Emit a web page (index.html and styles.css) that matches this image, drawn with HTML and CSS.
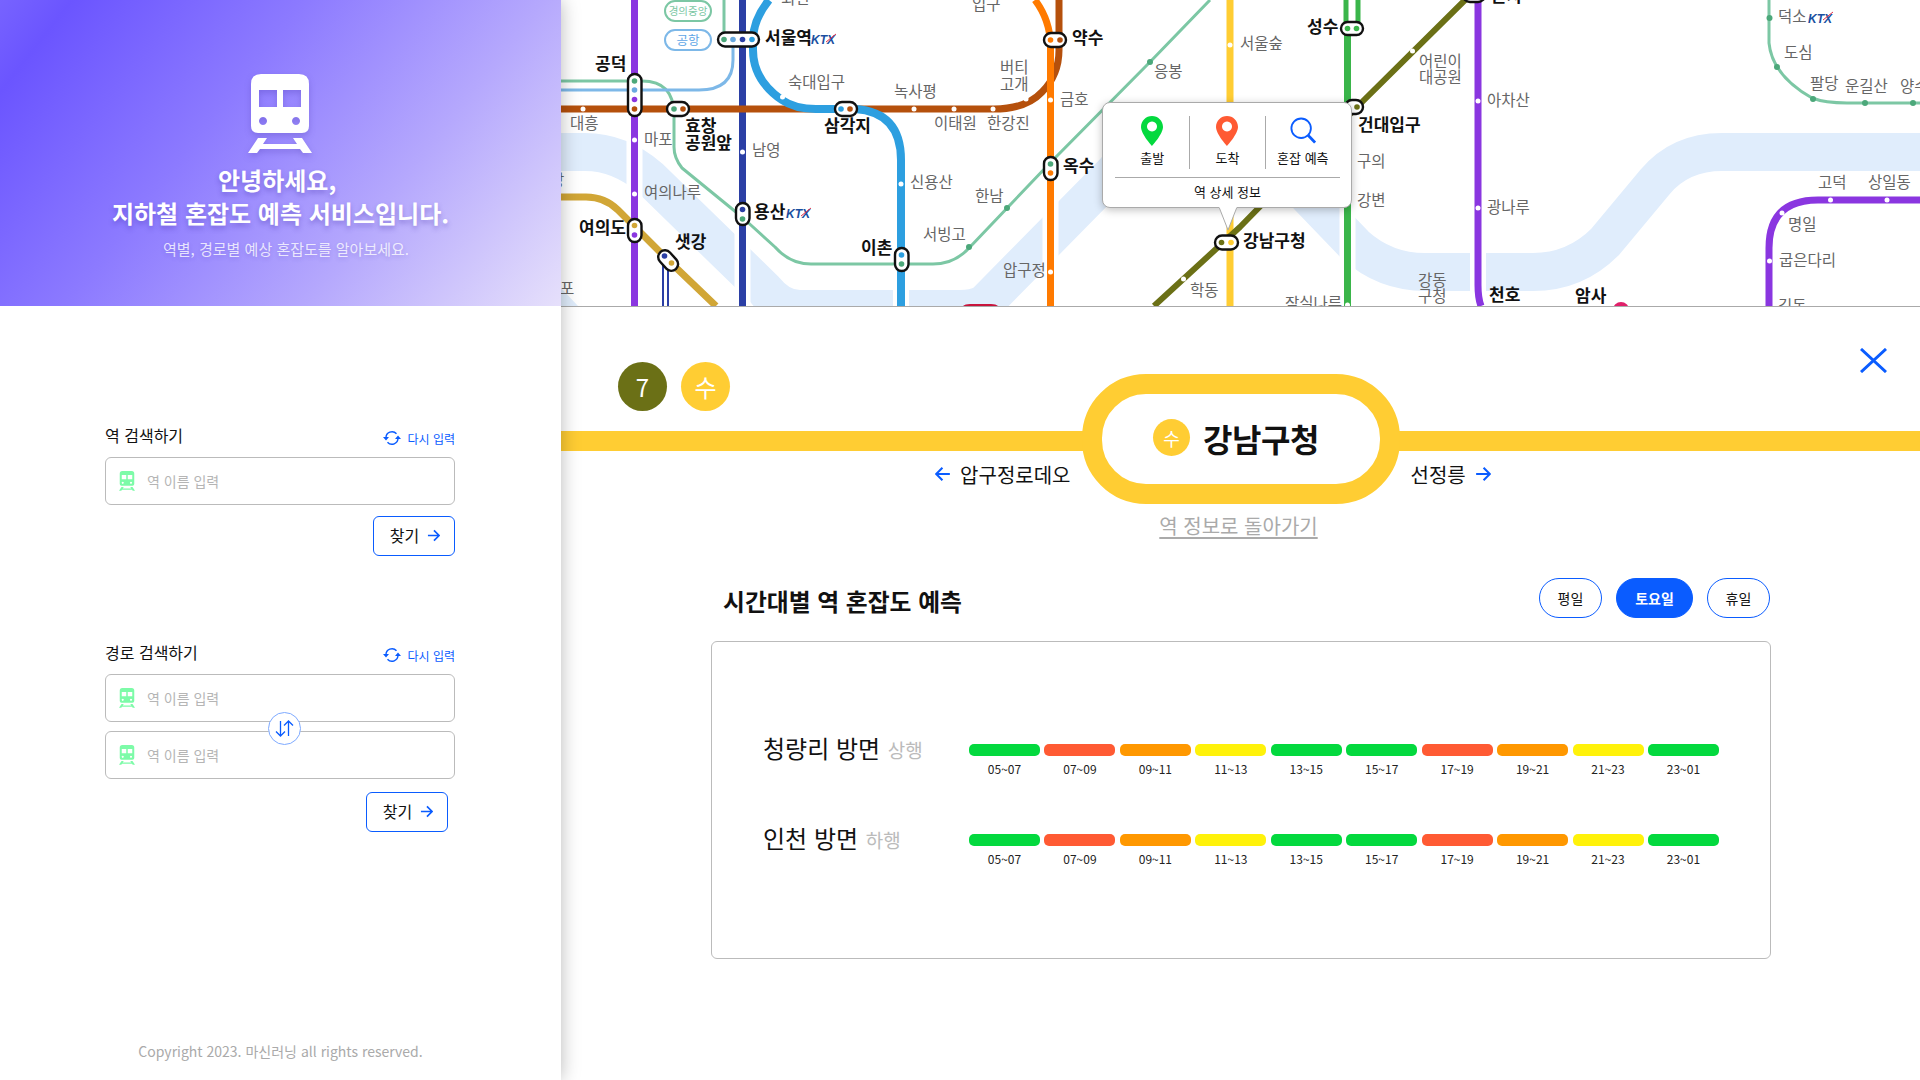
FILE: index.html
```html
<!DOCTYPE html>
<html lang="ko">
<head>
<meta charset="utf-8">
<title>지하철 혼잡도 예측</title>
<link rel="stylesheet" href="styles.css">
</head>
<body>
<svg class="defs" width="0" height="0">
  <symbol id="train" viewBox="0 0 64 80">
    <path fill-rule="evenodd" d="M13 0H51Q61 0 61 10V52Q61 59 54 59H10Q3 59 3 52V10Q3 0 13 0ZM11 16V33H29V16ZM35 16V33H53V16ZM15 43a4 4 0 1 0 0.01 0ZM48 43a4 4 0 1 0 0.01 0Z"/>
    <path d="M10 64H19L15 70H49L45 64H54L64 79H55L52 75H12L9 79H0Z"/>
  </symbol>
  <symbol id="reload" viewBox="0 0 18 16">
    <path d="M3 8A6 6 0 0 1 13.500 3.800M15 8A6 6 0 0 1 4.500 12.200" fill="none" stroke="currentColor" stroke-width="1.400"/>
    <path d="M0 7H6L3 10.500ZM12 9H18L15 5.500Z" fill="currentColor"/>
  </symbol>
  <symbol id="arrow" viewBox="0 0 14 14">
    <path d="M1 7H13M7.500 1.500L13 7L7.500 12.500" fill="none" stroke="currentColor" stroke-width="1.800"/>
  </symbol>
  <symbol id="pin" viewBox="0 0 22 30">
    <path fill-rule="evenodd" d="M11 0C5 0 0 4.800 0 11C0 18 11 30 11 30S22 18 22 11C22 4.800 17 0 11 0ZM11 5.500a5 5 0 1 0 0.01 0Z"/>
  </symbol>
</svg>

<div class="app">
  <aside class="side">
    <header class="hero">
      <svg class="hero-icon"><use href="#train"/></svg>
      <h1 class="hero-title">안녕하세요,&nbsp;<br>지하철 혼잡도 예측 서비스입니다.</h1>
      <p class="hero-sub">역별, 경로별 예상 혼잡도를 알아보세요.</p>
    </header>

    <section class="search search-station">
      <div class="search-head">
        <h2 class="search-title">역 검색하기</h2>
        <span class="reset"><svg class="reset-icon"><use href="#reload"/></svg>다시 입력</span>
      </div>
      <label class="field"><svg class="field-icon"><use href="#train"/></svg><span class="placeholder">역 이름 입력</span></label>
      <div class="find-row"><button class="find">찾기<svg class="find-arrow"><use href="#arrow"/></svg></button></div>
    </section>

    <section class="search search-route">
      <div class="search-head">
        <h2 class="search-title">경로 검색하기</h2>
        <span class="reset"><svg class="reset-icon"><use href="#reload"/></svg>다시 입력</span>
      </div>
      <div class="route-fields">
        <label class="field"><svg class="field-icon"><use href="#train"/></svg><span class="placeholder">역 이름 입력</span></label>
        <label class="field"><svg class="field-icon"><use href="#train"/></svg><span class="placeholder">역 이름 입력</span></label>
        <span class="swap">
          <svg width="19" height="19" viewBox="0 0 19 19"><path d="M5.500 2V17M1 12.500L5.500 17L10 12.500M13.500 17V2M9 6.500L13.500 2L18 6.500" fill="none" stroke="currentColor" stroke-width="1.300"/></svg>
        </span>
      </div>
      <div class="find-row find-row-route"><button class="find">찾기<svg class="find-arrow"><use href="#arrow"/></svg></button></div>
    </section>

    <footer class="copy">Copyright 2023. 마신러닝 all rights reserved.</footer>
  </aside>

  <main class="main">
    <div class="map">
      <svg class="map-svg" width="1359" height="306" viewBox="561 0 1359 306">
        <!-- river -->
        <path d="M561 288L578 306H561Z" fill="#e0edfc"/>
        <g fill="none" stroke="#e0edfc" stroke-linejoin="round">
          <path stroke-width="38" d="M1930 152H1722Q1680 152 1655 182L1605 242Q1575 272 1533 272H1425Q1385 272 1355 245L1283 170Q1250 135 1200 135H1170Q1140 135 1115 171L985 303Q975 309 960 309H800Q780 309 765 290L650 178Q620 152 585 152H561"/>
        </g>
        <!-- white gaps where lines cross the river -->
        <g fill="none" stroke="#fff" stroke-width="16">
          <path d="M634.500 0V306M742.500 0V306M901 150V306M1050.500 0V306M1230 0V306M1347.500 0V306M1478 0V306"/>
        </g>
        <!-- lines -->
        <g fill="none" stroke-linejoin="round">
          <path stroke="#7cc7a4" stroke-width="3" d="M561 81H642Q674 81 674 115V147Q674 158 682 168L742 217L775 247Q790 264 811 264H933Q955 264 970 247L1050 163L1150 62L1210 0"/>
          <path stroke="#7cc7a4" stroke-width="3" d="M724 0V36"/>
          <path stroke="#7db8e8" stroke-width="3" d="M561 90H699Q733 90 733 60V40"/>
          <path stroke="#7cc7a4" stroke-width="3" d="M1769 0V43Q1772 75 1812 98Q1825 103 1847 103H1920"/>
          <path stroke="#2b3fa5" stroke-width="2" d="M663 262V306M668 262V306"/>
          <path stroke="#d1a636" stroke-width="7" d="M561 197H586Q605 197 618 210L668 260L716 306"/>
          <path stroke="#8a36e0" stroke-width="7" d="M634.500 0V306"/>
          <path stroke="#2b3fa5" stroke-width="7" d="M742.500 0V306"/>
          <path stroke="#b5500c" stroke-width="7" d="M561 109H994Q1026 109 1042 92Q1059 75 1059 50V0"/>
          <path stroke="#2d9fe0" stroke-width="8" d="M769 0Q753 20 753 40V50Q753 80 782 100Q795 109 816 109H855Q901 112 901 160V306"/>
          <path stroke="#ff7a00" stroke-width="7" d="M1035 0Q1050 20 1050.500 45V306"/>
          <path stroke="#ffcd33" stroke-width="7" d="M1230 0V306"/>
          <path stroke="#6b7016" stroke-width="6" d="M1154 306L1240 227L1357 107L1465 0"/>
          <path stroke="#3ab54a" stroke-width="7" d="M1347.500 30V306"/>
          <path stroke="#3ab54a" stroke-width="5" d="M1346 0V30M1358 0V30"/>
          <path stroke="#8a36e0" stroke-width="7" d="M1478 0V285Q1478 298 1481 306"/>
          <path stroke="#8a36e0" stroke-width="7" d="M1769 306V248Q1769 200 1818 200H1920"/>
        </g>
        <path d="M963 306Q965 304 970 304H991Q996 304 998 306Z" fill="#c8143c"/>
        <circle cx="1621" cy="310" r="8" fill="#e0206a"/>
        <!-- plain stations -->
        <g fill="#fff">
          <circle cx="583" cy="109" r="2.500"/><circle cx="914" cy="109" r="2.500"/><circle cx="954" cy="109" r="2.500"/><circle cx="993" cy="109" r="2.500"/><circle cx="1026" cy="99" r="2.500"/>
          <circle cx="634.500" cy="140" r="2.500"/><circle cx="634.500" cy="194" r="2.500"/><circle cx="742.500" cy="152" r="2.500"/>
          <circle cx="782.500" cy="97" r="2.500"/><circle cx="901" cy="184" r="2.500"/>
          <circle cx="1050.500" cy="100" r="2.500"/><circle cx="1050.500" cy="272" r="2.500"/><circle cx="1230" cy="45" r="2.500"/>
          <circle cx="1183.500" cy="279" r="2.500"/><circle cx="1412.500" cy="51" r="2.500"/>
          <circle cx="1478" cy="101" r="2.500"/><circle cx="1478" cy="208" r="2.500"/>
          <circle cx="1830.500" cy="200" r="2.500"/><circle cx="1887" cy="200" r="2.500"/><circle cx="1782" cy="213" r="2.500"/><circle cx="1769.500" cy="261" r="2.500"/>
          <circle cx="1347.500" cy="305" r="2.500"/>
        </g>
        <g fill="#4ca87a">
          <circle cx="1150" cy="62" r="3"/><circle cx="1007" cy="208" r="3"/><circle cx="969" cy="247" r="3"/>
          <circle cx="1769.500" cy="18" r="3"/><circle cx="1777" cy="67" r="3"/><circle cx="1813" cy="99" r="3"/><circle cx="1865" cy="103" r="3"/><circle cx="1913" cy="103" r="3"/>
        </g>
        <!-- transfer stations -->
        <g fill="#fff" stroke="#111" stroke-width="2.400">
          <rect x="718" y="32.500" width="41" height="14" rx="7"/>
          <rect x="628" y="74" width="13.500" height="42" rx="6.700"/>
          <rect x="667" y="102" width="22" height="14" rx="7"/>
          <rect x="835" y="102" width="22" height="14" rx="7"/>
          <rect x="1044" y="33" width="22" height="14" rx="7"/>
          <rect x="1044" y="157" width="13.500" height="23" rx="6.700"/>
          <rect x="736" y="203" width="13.500" height="22" rx="6.700"/>
          <rect x="895" y="248" width="13.500" height="23" rx="6.700"/>
          <rect x="628" y="219" width="13.500" height="23" rx="6.700"/>
          <rect x="661" y="249" width="13.500" height="23" rx="6.700" transform="rotate(-42 668 260)"/>
          <rect x="1215" y="235.500" width="23" height="14" rx="7"/>
          <rect x="1341" y="22" width="22" height="13" rx="6.500"/>
          <rect x="1345" y="100" width="18" height="14" rx="7"/>
          <rect x="1463" y="-12" width="22" height="14" rx="7"/>
        </g>
        <circle cx="724" cy="39.500" r="2.800" fill="#4ca87a"/><circle cx="733" cy="39.500" r="2.800" fill="#6aa9e0"/><circle cx="742.500" cy="39.500" r="2.800" fill="#2b3fa5"/><circle cx="752" cy="39.500" r="2.800" fill="#2d9fe0"/>
        <circle cx="634.500" cy="81" r="2.800" fill="#4ca87a"/><circle cx="634.500" cy="90" r="2.800" fill="#6aa9e0"/><circle cx="634.500" cy="99.500" r="2.800" fill="#8a36e0"/><circle cx="634.500" cy="109" r="2.800" fill="#b5500c"/>
        <circle cx="674" cy="109" r="2.800" fill="#4ca87a"/><circle cx="683" cy="109" r="2.800" fill="#b5500c"/>
        <circle cx="841" cy="109" r="2.800" fill="#2d9fe0"/><circle cx="850" cy="109" r="2.800" fill="#b5500c"/>
        <circle cx="1050.500" cy="40" r="2.800" fill="#ff7a00"/><circle cx="1060" cy="40" r="2.800" fill="#b5500c"/>
        <circle cx="1050.500" cy="164" r="2.800" fill="#4ca87a"/><circle cx="1050.500" cy="173" r="2.800" fill="#ff7a00"/>
        <circle cx="742.500" cy="209.500" r="2.800" fill="#2b3fa5"/><circle cx="742.500" cy="219" r="2.800" fill="#4ca87a"/>
        <circle cx="901.500" cy="255" r="2.800" fill="#2d9fe0"/><circle cx="901.500" cy="264" r="2.800" fill="#4ca87a"/>
        <circle cx="634.500" cy="225.500" r="2.800" fill="#d1a636"/><circle cx="634.500" cy="235" r="2.800" fill="#8a36e0"/>
        <circle cx="664.500" cy="256" r="2.800" fill="#2b3fa5"/><circle cx="671.500" cy="263" r="2.800" fill="#d1a636"/>
        <circle cx="1221.500" cy="242.500" r="2.800" fill="#6b7016"/><circle cx="1231" cy="242.500" r="2.800" fill="#ffcd33"/>
        <circle cx="1347.500" cy="28.500" r="2.800" fill="#3ab54a"/><circle cx="1356.500" cy="28.500" r="2.800" fill="#3ab54a"/>
        <circle cx="1357" cy="107" r="2.800" fill="#6b7016"/>
        <!-- line tags -->
        <rect x="665" y="1" width="46" height="20" rx="10" class="tag-green"/>
        <text x="688" y="15" class="tag-text tag-text-green">경의중앙</text>
        <rect x="665" y="30" width="46" height="20" rx="10" class="tag-blue"/>
        <text x="688" y="44.500" class="tag-text tag-text-blue">공항</text>
        <!-- labels -->
        <g class="lb">
          <text x="570" y="129">대흥</text><text x="644" y="145">마포</text><text x="752" y="156">남영</text>
          <text x="788" y="88">숙대입구</text><text x="894" y="97">녹사평</text><text x="1000" y="73">버티</text><text x="1000" y="90">고개</text>
          <text x="934" y="129">이태원</text><text x="987" y="129">한강진</text><text x="1060" y="105">금호</text><text x="1154" y="77">응봉</text>
          <text x="910" y="188">신용산</text><text x="975" y="202">한남</text><text x="923" y="240">서빙고</text><text x="1003" y="276">압구정</text>
          <text x="1190" y="296">학동</text><text x="644" y="198">여의나루</text><text x="560" y="294">포</text><text x="550" y="186">당</text>
          <text x="972" y="10">입구</text><text x="781" y="4">회현</text><text x="1240" y="49">서울숲</text>
          <text x="1419" y="67">어린이</text><text x="1419" y="83">대공원</text><text x="1487" y="106">아차산</text><text x="1357" y="167">구의</text><text x="1357" y="206">강변</text>
          <text x="1487" y="213">광나루</text><text x="1418" y="286">강동</text><text x="1418" y="302">구청</text><text x="1285" y="309">잠실나루</text>
          <text x="1778" y="22">덕소</text><text x="1784" y="58">도심</text><text x="1810" y="89">팔당</text><text x="1845" y="92">운길산</text><text x="1900" y="92">양수</text>
          <text x="1818" y="188">고덕</text><text x="1868" y="188">상일동</text><text x="1788" y="230">명일</text><text x="1779" y="266">굽은다리</text><text x="1778" y="312">길동</text>
        </g>
        <g class="lb-strong">
          <text x="765" y="44">서울역</text><text x="595" y="70">공덕</text><text x="685" y="132">효창</text><text x="685" y="149">공원앞</text>
          <text x="824" y="132">삼각지</text><text x="1072" y="44">약수</text><text x="1063" y="172">옥수</text><text x="861" y="254">이촌</text>
          <text x="579" y="234">여의도</text><text x="675" y="248">샛강</text><text x="754" y="218">용산</text><text x="1307" y="33">성수</text>
          <text x="1358" y="131">건대입구</text><text x="1243" y="247">강남구청</text><text x="1489" y="301">천호</text><text x="1575" y="302">암사</text><text x="1491" y="2">군자</text>
        </g>
        <g class="ktx">
          <text x="811" y="44">KTX</text><text x="786" y="218">KTX</text><text x="1808" y="23">KTX</text>
        </g>
        <g stroke="#e0304a" stroke-width="1">
          <path d="M826 42L836 34M801 216L811 208M1823 20L1833 12"/>
        </g>
      </svg>

      <div class="popup">
        <div class="pop-actions">
          <div class="pop-item"><svg class="pin pin-start"><use href="#pin"/></svg><span>출발</span></div>
          <div class="pop-item"><svg class="pin pin-end"><use href="#pin"/></svg><span>도착</span></div>
          <div class="pop-item">
            <svg class="pin" viewBox="0 0 28 30"><circle cx="12" cy="12" r="10.500" fill="none" stroke="#0a5cff" stroke-width="2"/><path d="M19.500 19.500L27 27.500" stroke="#0a5cff" stroke-width="3"/></svg>
            <span>혼잡 예측</span>
          </div>
        </div>
        <div class="pop-detail">역 상세 정보</div>
        <svg class="pop-tail" width="20" height="24" viewBox="0 0 20 24"><path d="M1 0L10 23L19 0" fill="#fff" stroke="#aaa"/><path d="M1 -1H19V0.500H1Z" fill="#fff"/></svg>
      </div>
    </div>

    <div class="detail">
      <div class="detail-top">
        <div class="badges">
          <span class="badge badge-7">7</span>
          <span class="badge badge-su">수</span>
        </div>
        <button class="close"><svg width="27" height="25" viewBox="0 0 27 25"><path d="M1 1L26 24M26 1L1 24" fill="none" stroke="currentColor" stroke-width="3"/></svg></button>
      </div>

      <div class="strip">
        <div class="neighbor neighbor-prev"><svg class="neighbor-arrow flip"><use href="#arrow"/></svg>압구정로데오</div>
        <div class="pill"><span class="pill-badge">수</span><span class="pill-name">강남구청</span></div>
        <div class="neighbor neighbor-next">선정릉<svg class="neighbor-arrow"><use href="#arrow"/></svg></div>
      </div>

      <a class="back">역 정보로 돌아가기</a>

      <section class="forecast">
        <div class="forecast-head">
          <h2 class="forecast-title">시간대별 역 혼잡도 예측</h2>
          <div class="days">
            <button class="day">평일</button>
            <button class="day day-on">토요일</button>
            <button class="day">휴일</button>
          </div>
        </div>
        <div class="card">
          <div class="row">
            <div class="row-name">청량리 방면 <small>상행</small></div>
            <div class="slots">
              <div class="slot"><i class="g"></i>05~07</div><div class="slot"><i class="r"></i>07~09</div><div class="slot"><i class="o"></i>09~11</div><div class="slot"><i class="y"></i>11~13</div><div class="slot"><i class="g"></i>13~15</div>
              <div class="slot"><i class="g"></i>15~17</div><div class="slot"><i class="r"></i>17~19</div><div class="slot"><i class="o"></i>19~21</div><div class="slot"><i class="y"></i>21~23</div><div class="slot"><i class="g"></i>23~01</div>
            </div>
          </div>
          <div class="row">
            <div class="row-name">인천 방면 <small>하행</small></div>
            <div class="slots">
              <div class="slot"><i class="g"></i>05~07</div><div class="slot"><i class="r"></i>07~09</div><div class="slot"><i class="o"></i>09~11</div><div class="slot"><i class="y"></i>11~13</div><div class="slot"><i class="g"></i>13~15</div>
              <div class="slot"><i class="g"></i>15~17</div><div class="slot"><i class="r"></i>17~19</div><div class="slot"><i class="o"></i>19~21</div><div class="slot"><i class="y"></i>21~23</div><div class="slot"><i class="g"></i>23~01</div>
            </div>
          </div>
        </div>
      </section>
    </div>
  </main>
</div>
</body>
</html>
```
FILE: styles.css
```css
* { box-sizing: border-box; }
html, body { margin: 0; height: 100%; overflow: hidden; background: #fff; }
body { font-family: "Noto Sans CJK KR", "Noto Sans", sans-serif; color: #111; }
h1, h2, p { margin: 0; font-weight: inherit; }
button { font: inherit; background: none; border: 0; padding: 0; color: inherit; }
.defs { position: absolute; }

.app { display: flex; height: 1080px; }

/* side panel */
.side { position: relative; z-index: 2; width: 561px; flex: none; height: 1080px; display: flex; flex-direction: column; background: #fff; box-shadow: 0 0 18px rgba(0,0,0,.28); }
.hero { height: 306px; flex: none; display: flex; flex-direction: column; align-items: center; padding-top: 74px; color: #fff; text-align: center;
  background: linear-gradient(128deg, #7763ff 0%, #6b55ff 9%, #8c7aff 38%, #b5a8fd 68%, #e6e0fb 100%); }
.hero-icon { width: 64px; height: 80px; margin-right: 2px; fill: #fff; filter: drop-shadow(0 3px 3px rgba(60,40,160,.25)); }
.hero-title { margin-top: 9px; font-size: 24px; font-weight: 700; line-height: 33px; text-shadow: 0 3px 5px rgba(60,40,160,.35); }
.hero-sub { margin-top: 8px; padding-left: 11px; font-size: 15px; line-height: 24px; color: rgba(255,255,255,.78); text-shadow: 0 2px 4px rgba(60,40,160,.2); }

.search { padding: 0 106px 0 105px; }
.search-station { margin-top: 117px; }
.search-route { margin-top: 84px; }
.search-head { display: flex; justify-content: space-between; align-items: center; height: 34px; padding-bottom: 10px; }
.search-title { font-size: 16px; line-height: 24px; }
.reset { display: flex; align-items: center; gap: 6px; font-size: 12px; color: #0a5cff; padding-top: 6px; }
.reset-icon { width: 18px; height: 16px; }
.field { display: flex; align-items: center; gap: 12px; height: 48px; padding-left: 13px; border: 1px solid #bbb; border-radius: 6px; background: #fff; }
.field-icon { width: 16px; height: 20px; fill: #7dfba8; }
.placeholder { font-size: 14px; color: #b5b5b5; }
.find-row { display: flex; justify-content: flex-end; margin-top: 11px; }
.find-row-route { margin-top: 13px; padding-right: 7px; }
.find { display: flex; align-items: center; justify-content: center; gap: 8px; width: 82px; height: 40px; padding: 0 0 2px 2px; border: 1.500px solid #0a5cff; border-radius: 6px; font-size: 16px; color: #111; }
.find-arrow { width: 13px; height: 13px; color: #0a5cff; }
.route-fields { position: relative; display: flex; flex-direction: column; gap: 9px; }
.swap { position: absolute; left: 163px; top: 38px; width: 33px; height: 33px; border: 1.500px solid #7eaaff; border-radius: 50%; background: #fff; color: #0a5cff; display: flex; align-items: center; justify-content: center; }
.copy { margin-top: auto; padding-bottom: 19px; text-align: center; font-size: 14px; line-height: 20px; color: #aaa; }

/* main */
.main { flex: 1; min-width: 0; display: flex; flex-direction: column; }
.map { position: relative; height: 307px; flex: none; border-bottom: 1px solid #aaa; overflow: hidden; }
.map-svg { display: block; }
.lb text { font-size: 15.500px; fill: #666; }
.lb-strong text { font-size: 17px; font-weight: 700; fill: #111; }
.ktx text { font-size: 12px; font-weight: 700; font-style: italic; fill: #1a4fa0; font-family: "Liberation Sans", sans-serif; }
.tag-green { fill: #fff; stroke: #7cc7a4; stroke-width: 2px; }
.tag-blue { fill: #fff; stroke: #7db8e8; stroke-width: 2px; }
.tag-text { text-anchor: middle; }
.tag-text-green { fill: #7cc7a4; font-size: 10.500px; }
.tag-text-blue { fill: #5ea6e6; font-size: 12.500px; }

.popup { position: absolute; left: 541px; top: 102px; width: 250px; height: 106px; padding: 13px 11px 0 12px; display: flex; flex-direction: column; background: #fff; border: 1px solid #aaa; border-radius: 8px; box-shadow: 0 2px 8px rgba(0,0,0,.25); }
.pop-actions { display: flex; height: 62px; border-bottom: 1px solid #aaa; padding-bottom: 8px; }
.pop-item { flex: 1; display: flex; flex-direction: column; align-items: center; font-size: 13px; line-height: 19px; gap: 2px; }
.pop-item + .pop-item { border-left: 1px solid #aaa; }
.pin { width: 26px; height: 30px; }
.pin-start { fill: #03d93e; }
.pin-end { fill: #ff5a33; }
.pop-detail { flex: 1; display: flex; align-items: center; justify-content: center; font-size: 13px; padding-bottom: 3px; }
.pop-tail { position: absolute; left: 115px; top: 104px; }

.detail { flex: 1; display: flex; flex-direction: column; }
.detail-top { height: 67px; display: flex; justify-content: space-between; align-items: flex-start; padding: 55px 33px 0 57px; }
.badges { display: flex; gap: 14px; }
.badge { width: 49px; height: 49px; border-radius: 50%; display: flex; align-items: center; justify-content: center; color: #fff; font-size: 24px; }
.badge-7 { background: #6b7016; }
.badge-su { background: #ffcd33; }
.close { color: #0a5cff; margin-top: -14px; line-height: 0; }

.strip { position: relative; display: grid; grid-template-columns: 1fr 318px 1fr; height: 130px; }
.strip::before { content: ""; position: absolute; left: 0; right: 0; top: 57px; height: 20px; background: #ffcd33; }
.pill { position: relative; height: 130px; border: 20px solid #ffcd33; border-radius: 64px; background: #fff; display: flex; align-items: center; justify-content: center; gap: 13px; padding: 0 9px 3px 0; }
.pill-badge { width: 37px; height: 37px; border-radius: 50%; background: #ffcd33; color: #fff; font-size: 18px; display: flex; align-items: center; justify-content: center; }
.pill-name { font-size: 32px; font-weight: 700; letter-spacing: -.5px; }
.neighbor { display: flex; align-items: center; gap: 9px; height: 30px; margin-top: 85px; font-size: 20px; }
.neighbor-prev { justify-content: flex-end; padding-right: 11px; }
.neighbor-next { padding-left: 11px; }
.neighbor-arrow { width: 16px; height: 16px; color: #0a5cff; }
.flip { transform: scaleX(-1); }

.back { align-self: center; margin: 8px 0 0 -4px; font-size: 20px; line-height: 28px; color: #aaa; text-decoration: underline; text-underline-offset: 3px; }

.forecast { width: 1060px; margin: 38px 0 0 150px; }
.forecast-head { display: flex; justify-content: space-between; align-items: flex-start; height: 40px; padding-left: 12px; }
.forecast-title { font-size: 23.800px; font-weight: 700; line-height: 36px; margin-top: 5px; }
.days { display: flex; gap: 14px; padding-right: 1px; }
.day { height: 40px; width: 63px; border: 1px solid #0a5cff; border-radius: 20px; font-size: 14px; color: #111; background: #fff; }
.day-on { width: 77px; background: #0a5cff; color: #fff; font-weight: 700; }
.card { margin-top: 23px; height: 318px; border: 1.500px solid #bbb; border-radius: 6px; padding: 91px 0 0 51px; display: flex; flex-direction: column; gap: 40px; }
.row { display: flex; height: 50px; }
.row-name { width: 206px; font-size: 24px; line-height: 30px; white-space: nowrap; }
.row-name small { font-size: 19px; color: #bbb; margin-left: 1px; }
.slots { display: flex; gap: 4.450px; }
.slot { width: 71px; text-align: center; font-size: 12px; line-height: 18px; color: #222; display: flex; flex-direction: column; gap: 4px; margin-top: 11px; }
.slot i { display: block; height: 12px; border-radius: 5px; }
.g { background: #03d93e; }
.r { background: #ff5a33; }
.o { background: #ff9800; }
.y { background: #fff20a; }
```
